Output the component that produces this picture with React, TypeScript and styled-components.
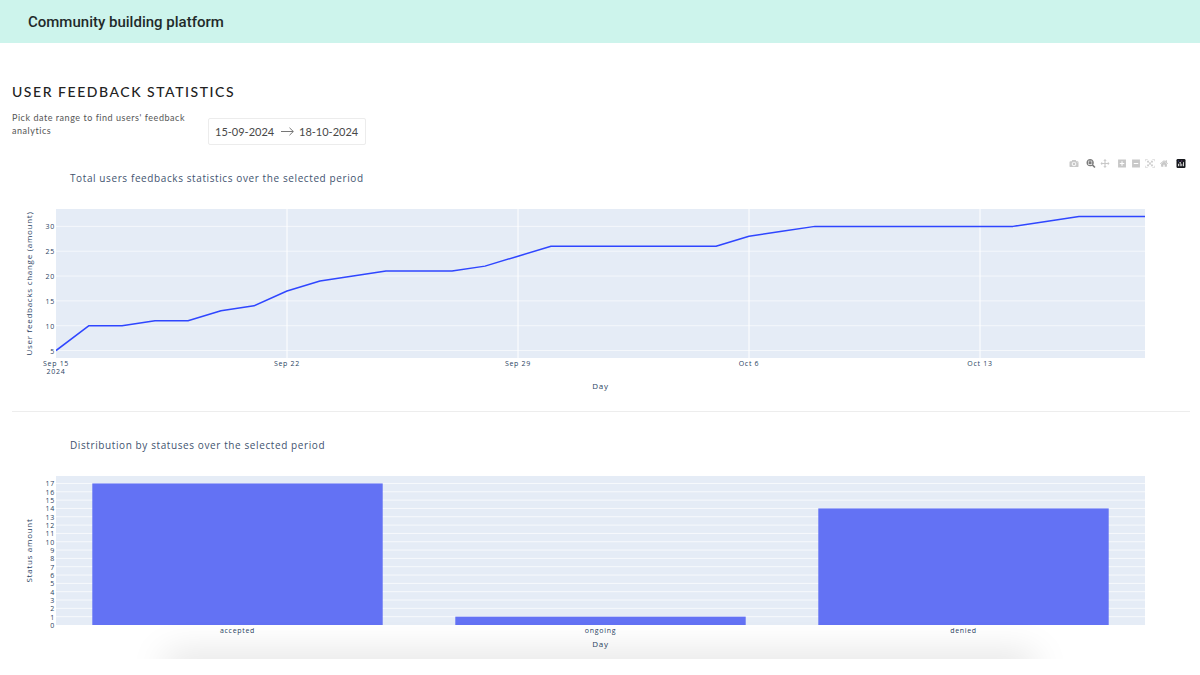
import React from "react";
import styled, { createGlobalStyle } from "styled-components";

const GlobalStyle = createGlobalStyle`
  *, *::before, *::after { box-sizing: border-box; }
  body {
    margin: 0;
    background: #fff;
    font-family: Lato, sans-serif;
    color: #222;
  }
`;

const Header = styled.header`
  display: flex;
  align-items: center;
  height: 43px;
  padding: 0 28px;
  background: #cdf4ec;
`;

const Brand = styled.a`
  font: 500 15px/20px Roboto, sans-serif;
  color: #1f2a2a;
  text-decoration: none;
`;

const Main = styled.main`
  padding: 40px 10px 0 12px;
`;

const PageTitle = styled.h1`
  margin: 0;
  font: 500 14px/18px Lato, sans-serif;
  letter-spacing: 0.11em;
  text-transform: uppercase;
`;

const Filters = styled.div`
  display: flex;
  align-items: flex-start;
  gap: 16px;
  padding-top: 10px;
`;

const Hint = styled.p`
  width: 180px;
  margin: 0;
  font-size: 9px;
  line-height: 13px;
  letter-spacing: 0.06em;
  color: #555;
`;

const DateRange = styled.div`
  display: flex;
  align-items: center;
  justify-content: space-between;
  width: 158px;
  height: 27px;
  margin-top: 7px;
  padding: 0 6px;
  border: 1px solid #ececec;
  border-radius: 2px;
`;

const DateInput = styled.input`
  width: 60px;
  padding: 0;
  border: 0;
  outline: 0;
  background: transparent;
  font: 400 11px/16px Lato, sans-serif;
  color: #484848;
`;

const Arrow = styled.svg`
  width: 13px;
  height: 9px;
  fill: none;
  stroke: #777;
`;

const ChartSection = styled.section`
  position: relative;
  & + & {
    border-top: 1px solid #ededed;
  }
`;

const ChartTitle = styled.h2`
  margin: 0;
  padding: 26px 0 24px 58px;
  font: 500 10px/14px "Open Sans", sans-serif;
  letter-spacing: 0.06em;
  color: #42536f;
`;

const ChartBody = styled.div`
  padding: 0 45px 0 44px;
`;

const Plot = styled.svg<{ $height: number }>`
  display: block;
  width: 100%;
  height: ${(p) => p.$height}px;
  overflow: visible;
`;

const Tick = styled.text`
  font: 500 7px "Open Sans", sans-serif;
  letter-spacing: 0.1em;
  fill: #2a3f5f;
`;

const AxisTitle = styled.text`
  font: 500 8px "Open Sans", sans-serif;
  letter-spacing: 0.09em;
  fill: #2a3f5f;
  text-anchor: middle;
`;

const XTitle = styled.p<{ $top: number; $bottom: number }>`
  margin: 0;
  padding: ${(p) => p.$top}px 0 ${(p) => p.$bottom}px;
  font: 500 8px/12px "Open Sans", sans-serif;
  letter-spacing: 0.09em;
  text-align: center;
  color: #2a3f5f;
`;

const Modebar = styled.div`
  position: absolute;
  top: 14px;
  right: 4px;
  display: flex;
  align-items: center;
`;

const ModeGroup = styled.div`
  display: flex;
  gap: 4px;
  margin-left: 7px;
`;

const ModeButton = styled.button<{ $active?: boolean }>`
  display: flex;
  width: 10px;
  height: 10px;
  padding: 0;
  border: 0;
  background: transparent;
  color: ${(p) => (p.$active ? "#7c7c7c" : "#c8c8c8")};
  svg {
    width: 10px;
    height: 9px;
    fill: currentColor;
  }
`;

const Footer = styled.footer`
  position: relative;
  height: 16px;
  clip-path: inset(-60px 0 0 0);
  &::before {
    content: "";
    position: absolute;
    inset: 0 14%;
    box-shadow: 0 0 36px 2px rgba(0, 0, 0, 0.17);
  }
  &::after {
    content: "";
    position: absolute;
    inset: 0;
    background: #fff;
  }
`;

const icons = {
  camera: {
    width: 1000,
    path: "m500 450c-83 0-150-67-150-150 0-83 67-150 150-150 83 0 150 67 150 150 0 83-67 150-150 150z m400 150h-120c-16 0-34 13-39 29l-31 93c-6 15-23 28-40 28h-340c-16 0-34-13-39-28l-31-94c-6-15-23-28-40-28h-120c-55 0-100-45-100-100v-450c0-55 45-100 100-100h800c55 0 100 45 100 100v450c0 55-45 100-100 100z m-400-550c-138 0-250 112-250 250 0 138 112 250 250 250 138 0 250-112 250-250 0-138-112-250-250-250z m365 380c-19 0-35 16-35 35 0 19 16 35 35 35 19 0 35-16 35-35 0-19-16-35-35-35z",
  },
  zoom: {
    width: 1000,
    path: "m1000-25l-250 251c40 63 63 138 63 218 0 224-182 406-407 406-224 0-406-182-406-406s183-406 407-406c80 0 155 22 218 62l250-250 125 125z m-812 250l0 438 437 0 0-438-437 0z m62 375l313 0 0-312-313 0 0 312z",
  },
  pan: {
    width: 1000,
    path: "m1000 350l-187 188 0-125-250 0 0 250 125 0-188 187-187-187 125 0 0-250-250 0 0 125-188-188 186-187 0 125 252 0 0-250-125 0 187-188 188 188-125 0 0 250 250 0 0-126 187 188z",
  },
  plus: {
    width: 875,
    path: "m1 787l0-875 875 0 0 875-875 0z m687-500l-187 0 0-187-125 0 0 187-188 0 0 125 188 0 0 187 125 0 0-187 187 0 0-125z",
  },
  minus: {
    width: 875,
    path: "m0 788l0-876 875 0 0 876-875 0z m688-500l-500 0 0 125 500 0 0-125z",
  },
  autoscale: {
    width: 1000,
    path: "m250 850l-187 0-63 0 0-62 0-188 63 0 0 188 187 0 0 62z m688 0l-188 0 0-62 188 0 0-188 62 0 0 188 0 62-62 0z m-875-938l0 188-63 0 0-188 0-62 63 0 187 0 0 62-187 0z m875 188l0-188-188 0 0-62 188 0 62 0 0 62 0 188-62 0z m-125 188l-1 0-93-94-156 156 156 156 92-93 2 0 0 250-250 0 0-2 93-92-156-156-156 156 94 92 0 2-250 0 0-250 0 0 93 93 157-156-157-156-93 94 0 0 0-250 250 0 0 0-94 93 156 157 156-157-93-93 0 0 250 0 0 250z",
  },
  home: {
    width: 928,
    path: "m786 296v-267q0-15-11-26t-25-10h-214v214h-143v-214h-214q-15 0-25 10t-11 26v267q0 1 0 2t0 2l321 264 321-264q1-1 1-4z m124 39l-34-41q-5-5-12-6h-2q-7 0-12 3l-386 322-386-322q-7-4-13-4-7 2-12 7l-35 41q-4 5-3 13t6 12l401 334q18 15 42 15t43-15l136-114v109q0 8 5 13t13 5h107q8 0 13-5t5-13v-227l122-102q5-5 6-12t-4-13z",
  },
};

type IconName = keyof typeof icons;

const modeGroups: { icon: IconName; label: string; active?: boolean }[][] = [
  [{ icon: "camera", label: "Download plot" }],
  [
    { icon: "zoom", label: "Zoom", active: true },
    { icon: "pan", label: "Pan" },
  ],
  [
    { icon: "plus", label: "Zoom in" },
    { icon: "minus", label: "Zoom out" },
    { icon: "autoscale", label: "Autoscale" },
    { icon: "home", label: "Reset axes" },
  ],
];

function ChartTools() {
  return (
    <Modebar>
      {modeGroups.map((group, i) => (
        <ModeGroup key={i}>
          {group.map(({ icon, label, active }) => (
            <ModeButton key={icon} type="button" aria-label={label} $active={active}>
              <svg viewBox={`0 0 ${icons[icon].width} 1000`}>
                <path d={icons[icon].path} transform="matrix(1 0 0 -1 0 850)" />
              </svg>
            </ModeButton>
          ))}
        </ModeGroup>
      ))}
      <ModeGroup>
        <ModeButton type="button" aria-label="Produced with Plotly">
          <svg viewBox="0 0 132 132">
            <rect width="132" height="132" rx="18" fill="#17181c" />
            <g fill="#fff">
              <rect x="24" y="66" width="12" height="42" rx="6" />
              <rect x="48" y="42" width="12" height="66" rx="6" />
              <rect x="72" y="66" width="12" height="42" rx="6" />
              <rect x="96" y="42" width="12" height="66" rx="6" />
            </g>
            <circle cx="78" cy="30" r="7" fill="#e763fa" />
            <circle cx="30" cy="30" r="7" fill="#636efa" />
          </svg>
        </ModeButton>
      </ModeGroup>
    </Modebar>
  );
}

const totals = [
  5, 10, 10, 11, 11, 13, 14, 17, 19, 20, 21, 21, 21, 22, 24, 26, 26, 26, 26, 26, 26, 28, 29, 30,
  30, 30, 30, 30, 30, 30, 31, 32, 32, 32,
];
const lastDay = totals.length - 1;
const weeks = ["Sep 15", "Sep 22", "Sep 29", "Oct 6", "Oct 13"];
const lineHeight = 149;
const lineMax = 33.5;
const lineSpan = 30;

function TotalsChart() {
  const y = (value: number) => ((lineMax - value) / lineSpan) * lineHeight;
  const points = totals.map((value, day) => `${day},${y(value)}`).join(" ");
  return (
    <Plot $height={lineHeight} role="img" aria-label="Total users feedbacks">
      <rect width="100%" height="100%" fill="#e5ecf6" />
      {weeks.map((week, i) => {
        const x = `${((i * 7) / lastDay) * 100}%`;
        return (
          <g key={week}>
            {i > 0 && <line x1={x} x2={x} y1="0" y2="100%" stroke="#fff" />}
            <Tick x={x} y={lineHeight + 8} textAnchor="middle">
              {week}
            </Tick>
          </g>
        );
      })}
      <Tick x="0" y={lineHeight + 16} textAnchor="middle">
        2024
      </Tick>
      {[5, 10, 15, 20, 25, 30].map((value) => (
        <g key={value}>
          <line x1="0" x2="100%" y1={y(value)} y2={y(value)} stroke="#fff" strokeOpacity="0.6" />
          <Tick x="-1" y={y(value) + 3} textAnchor="end">
            {value}
          </Tick>
        </g>
      ))}
      <svg viewBox={`0 0 ${lastDay} ${lineHeight}`} width="100%" height="100%" preserveAspectRatio="none">
        <polyline
          points={points}
          fill="none"
          stroke="#2f46ff"
          strokeWidth="1.5"
          strokeLinejoin="round"
          vectorEffect="non-scaling-stroke"
        />
      </svg>
      <AxisTitle transform={`translate(-24 ${lineHeight / 2}) rotate(-90)`}>
        User feedbacks change (amount)
      </AxisTitle>
    </Plot>
  );
}

const statuses = [
  { name: "accepted", amount: 17 },
  { name: "ongoing", amount: 1 },
  { name: "denied", amount: 14 },
];
const barHeight = 149;
const barUnit = (barHeight * 0.95) / 17;

function StatusChart() {
  const y = (value: number) => barHeight - value * barUnit;
  const slot = 100 / statuses.length;
  return (
    <Plot $height={barHeight} role="img" aria-label="Distribution by statuses">
      <rect width="100%" height="100%" fill="#e5ecf6" />
      {Array.from({ length: 18 }, (_, value) => (
        <g key={value}>
          {value > 0 && <line x1="0" x2="100%" y1={y(value)} y2={y(value)} stroke="#fff" strokeOpacity="0.7" />}
          <Tick x="-1" y={y(value) + 3} textAnchor="end">
            {value}
          </Tick>
        </g>
      ))}
      {statuses.map(({ name, amount }, i) => (
        <g key={name}>
          <rect
            x={`${slot * (i + 0.1)}%`}
            y={y(amount)}
            width={`${slot * 0.8}%`}
            height={amount * barUnit}
            fill="#6372f4"
          />
          <Tick x={`${slot * (i + 0.5)}%`} y={barHeight + 8} textAnchor="middle">
            {name}
          </Tick>
        </g>
      ))}
      <AxisTitle transform={`translate(-24 ${barHeight / 2}) rotate(-90)`}>Status amount</AxisTitle>
    </Plot>
  );
}

export default function App() {
  return (
    <>
      <GlobalStyle />
      <Header>
        <Brand href="#">Community building platform</Brand>
      </Header>
      <Main>
        <PageTitle>User feedback statistics</PageTitle>
        <Filters>
          <Hint id="range-hint">Pick date range to find users' feedback analytics</Hint>
          <DateRange role="group" aria-labelledby="range-hint">
            <DateInput aria-label="Start date" defaultValue="15-09-2024" />
            <Arrow viewBox="0 0 13 9" aria-hidden="true">
              <path d="M0 4.5h12.3M8.5 0.8l3.8 3.7l-3.8 3.7" />
            </Arrow>
            <DateInput aria-label="End date" defaultValue="18-10-2024" />
          </DateRange>
        </Filters>
        <ChartSection>
          <ChartTools />
          <ChartTitle>Total users feedbacks statistics over the selected period</ChartTitle>
          <ChartBody>
            <TotalsChart />
            <XTitle $top={22} $bottom={19}>
              Day
            </XTitle>
          </ChartBody>
        </ChartSection>
        <ChartSection>
          <ChartTitle>Distribution by statuses over the selected period</ChartTitle>
          <ChartBody>
            <StatusChart />
            <XTitle $top={13} $bottom={9}>
              Day
            </XTitle>
          </ChartBody>
        </ChartSection>
      </Main>
      <Footer />
    </>
  );
}
